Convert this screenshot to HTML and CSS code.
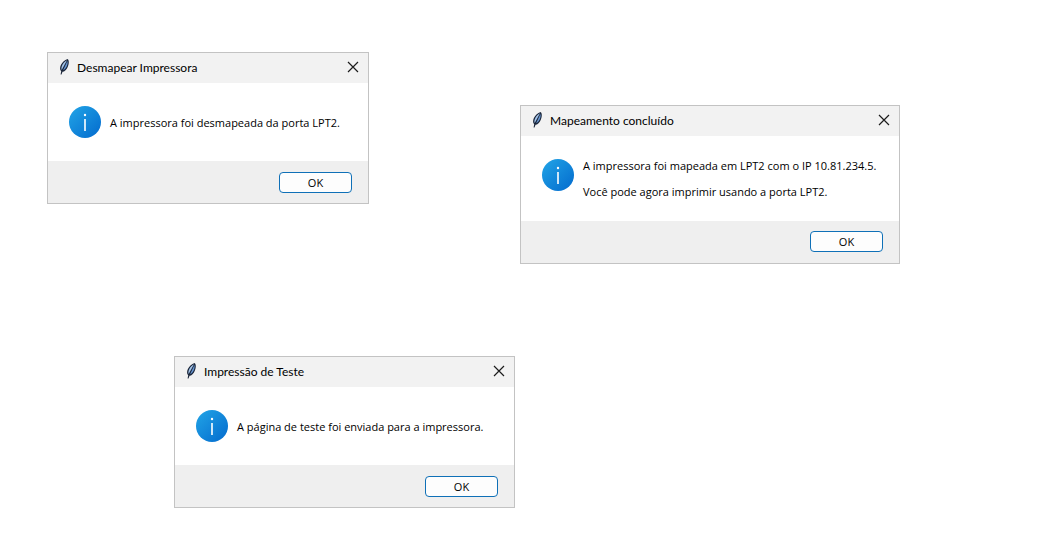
FILE: index.html
```
<!DOCTYPE html>
<html lang="pt-BR">
<head>
<meta charset="utf-8">
<meta name="viewport" content="width=device-width, initial-scale=1">
<title>Impressora</title>
<link rel="stylesheet" href="styles.css">
</head>
<body>
<svg class="defs" aria-hidden="true">
  <defs>
    <linearGradient id="blue" x1="0" y1="0" x2="1" y2="1">
      <stop offset="0.1" stop-color="#1f9fe4"/>
      <stop offset="0.9" stop-color="#0670d0"/>
    </linearGradient>
    <symbol id="feather" viewBox="0 0 16 16">
      <path d="M11.500 0c1.300.8 1.600 3 1 5.400-.7 3-2.300 5.700-4.500 7.100l-1.500.2-1 2.900-.9-.2.600-3.200c-1.600-1.400-1.300-4.100-.2-6.400C6.300 3.300 8.800.8 11.500 0z" fill="#1b263a"/>
      <path d="M11 1.200C8.900 2.200 6.900 4.400 6 6.700c-.7 1.700-.8 3.300-.3 4.400z" fill="#a4c4ea"/>
      <path d="M11.400 1.900c.5 1.500.2 3.500-.5 5.100-.8 1.900-1.900 3.300-3.800 4.300z" fill="#6594d0"/>
    </symbol>
    <symbol id="info" viewBox="0 0 32 32">
      <circle cx="16" cy="16" r="16" fill="url(#blue)"/>
      <circle cx="16" cy="9" r="1.200" fill="#fff"/>
      <path d="M16 13V25" stroke="#fff" stroke-width="1.600"/>
    </symbol>
    <symbol id="close" viewBox="0 0 12 12">
      <path d="M1 1l10 10M11 1L1 11" stroke="#1c1c1c" stroke-width="1.200" fill="none"/>
    </symbol>
  </defs>
</svg>
<main class="desktop">
  <section class="dialog dialog-unmap" role="dialog" aria-labelledby="t1">
    <header class="titlebar">
      <svg class="feather" aria-hidden="true"><use href="#feather"/></svg>
      <h2 class="title" id="t1">Desmapear Impressora</h2>
      <button class="close" type="button" aria-label="Fechar"><svg class="cross" aria-hidden="true"><use href="#close"/></svg></button>
    </header>
    <div class="content">
      <svg class="info" aria-hidden="true"><use href="#info"/></svg>
      <div class="message"><p>A impressora foi desmapeada da porta LPT2.</p></div>
    </div>
    <footer class="actions"><button class="ok" type="button">OK</button></footer>
  </section>
  <section class="dialog dialog-map" role="dialog" aria-labelledby="t2">
    <header class="titlebar">
      <svg class="feather" aria-hidden="true"><use href="#feather"/></svg>
      <h2 class="title" id="t2">Mapeamento concluído</h2>
      <button class="close" type="button" aria-label="Fechar"><svg class="cross" aria-hidden="true"><use href="#close"/></svg></button>
    </header>
    <div class="content">
      <svg class="info" aria-hidden="true"><use href="#info"/></svg>
      <div class="message"><p>A impressora foi mapeada em LPT2 com o IP 10.81.234.5.</p><p>Você pode agora imprimir usando a porta LPT2.</p></div>
    </div>
    <footer class="actions"><button class="ok" type="button">OK</button></footer>
  </section>
  <section class="dialog dialog-test" role="dialog" aria-labelledby="t3">
    <header class="titlebar">
      <svg class="feather" aria-hidden="true"><use href="#feather"/></svg>
      <h2 class="title" id="t3">Impressão de Teste</h2>
      <button class="close" type="button" aria-label="Fechar"><svg class="cross" aria-hidden="true"><use href="#close"/></svg></button>
    </header>
    <div class="content">
      <svg class="info" aria-hidden="true"><use href="#info"/></svg>
      <div class="message"><p>A página de teste foi enviada para a impressora.</p></div>
    </div>
    <footer class="actions"><button class="ok" type="button">OK</button></footer>
  </section>
</main>
</body>
</html>
```
FILE: styles.css
```
* { box-sizing: border-box; }
body {
  margin: 0;
  background: #fff;
  color: #000;
  font-family: "Open Sans", "Noto Sans", sans-serif;
  font-size: 11px;
}
.defs { position: absolute; width: 0; height: 0; }
.desktop { position: relative; min-height: 100vh; }
.dialog {
  position: absolute;
  border: 1px solid #c3c3c3;
  background: #fff;
}
.dialog-unmap { left: 47px; top: 52px; width: 322px; }
.dialog-map { left: 520px; top: 105px; width: 380px; }
.dialog-test { left: 174px; top: 356px; width: 341px; }
.titlebar {
  display: flex;
  align-items: center;
  min-height: 30px;
  padding: 0 8px;
  background: #f2f2f2;
}
.feather { width: 16px; height: 16px; margin-bottom: 2px; }
.title {
  flex: 1;
  margin: 0 0 0 5px;
  font-family: Lato, "Open Sans", sans-serif;
  font-size: 12px;
  font-weight: 400;
  line-height: 16px;
}
.close {
  display: flex;
  padding: 1px;
  margin-bottom: 2px;
  border: 0;
  background: none;
}
.cross { width: 12px; height: 12px; }
.content {
  display: flex;
  align-items: center;
  gap: 9px;
  padding: 23px 12px 23px 21px;
}
.dialog-map .content {
  align-items: flex-start;
  padding-top: 22px;
  padding-bottom: 21px;
}
.info { flex: none; width: 32px; height: 32px; }
.dialog-map .info { margin-top: 1px; }
.message { padding-top: 2px; white-space: nowrap; }
.dialog-map .message { padding-top: 0; }
.message p { margin: 0; line-height: 16px; }
.message p + p { margin-top: 10px; }
.actions {
  display: flex;
  justify-content: flex-end;
  padding: 11px 16px 10px;
  background: #efefef;
}
.dialog-map .actions { padding: 10px 16px 11px; }
.ok {
  width: 73px;
  height: 21px;
  padding: 0;
  border: 1px solid #0f70b7;
  border-radius: 4px;
  background: #fdfdfd;
  color: #000;
  font: inherit;
  line-height: 16px;
}
```
